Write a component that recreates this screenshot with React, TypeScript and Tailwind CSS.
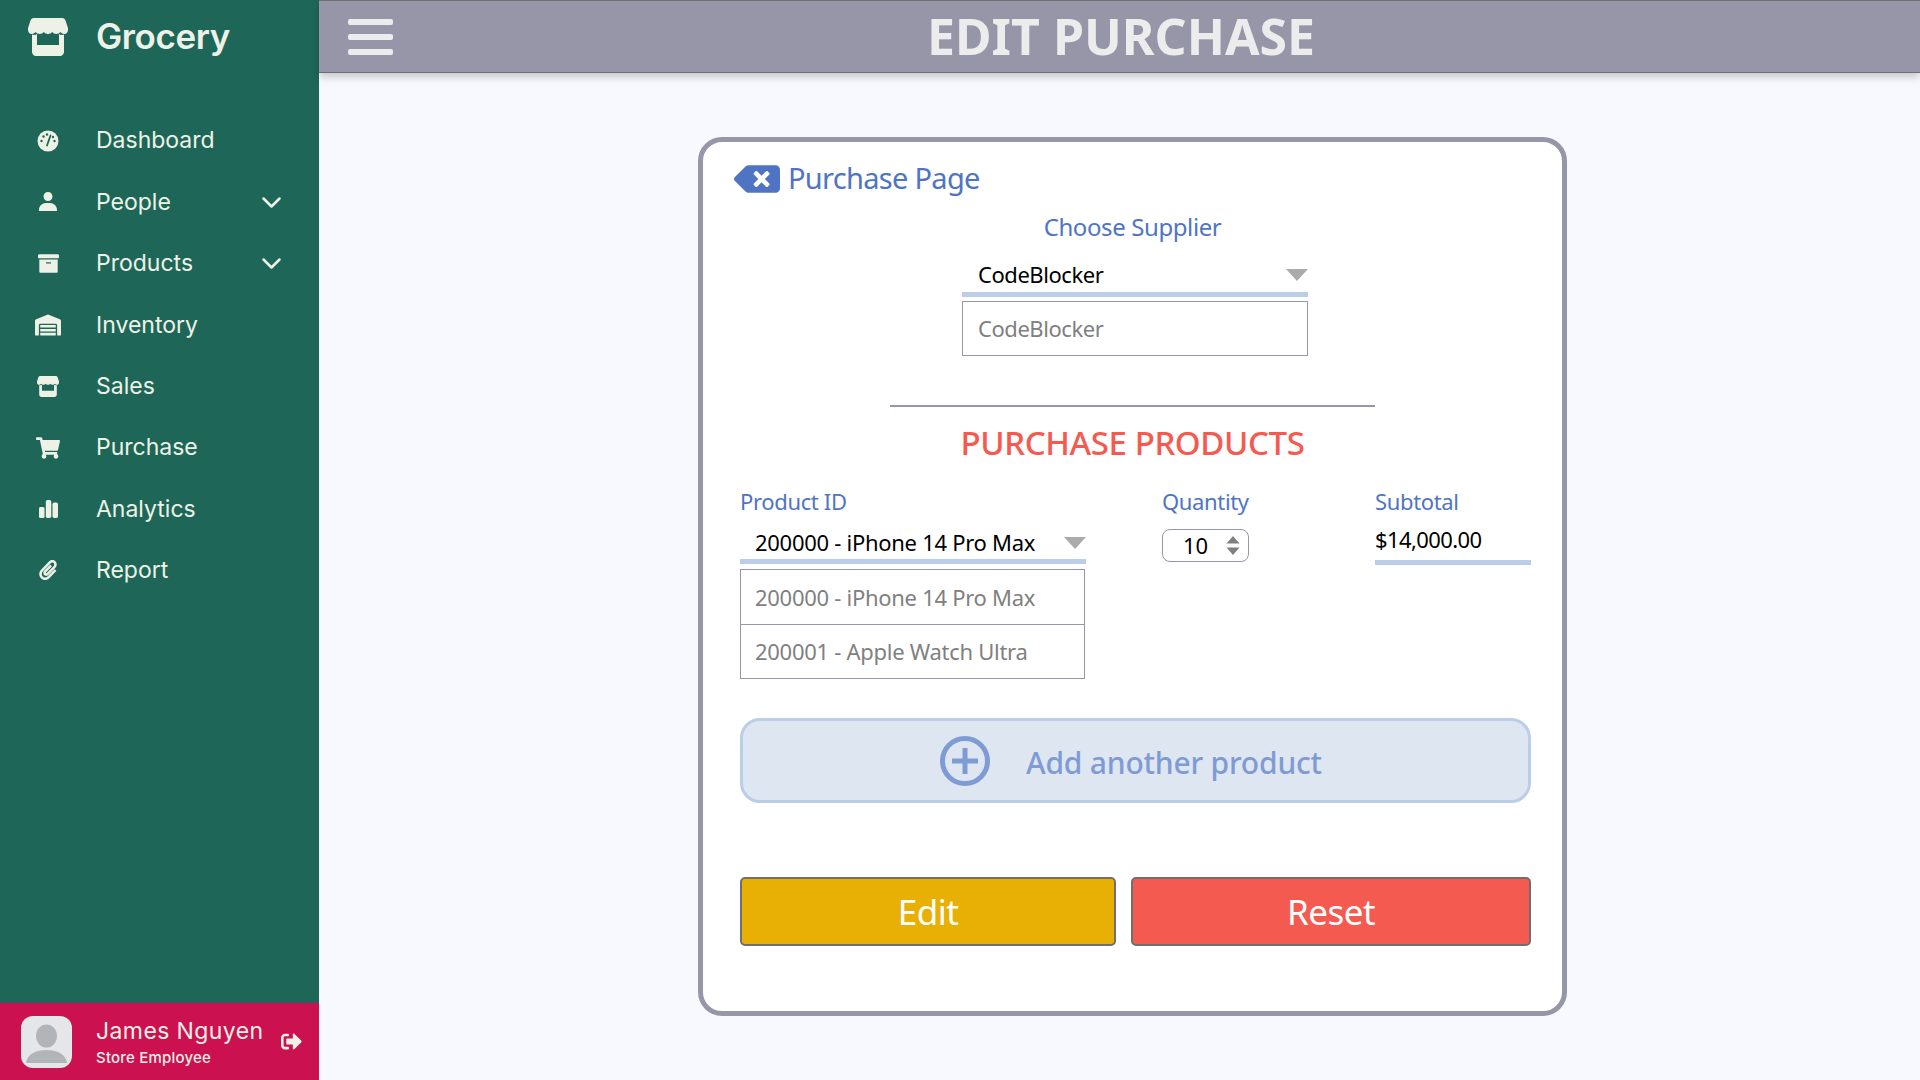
import { ReactNode } from 'react';
import { BiSolidUser } from 'react-icons/bi';
import { FaArchive, FaBackspace, FaPaperclip, FaShoppingCart, FaSignOutAlt, FaWarehouse } from 'react-icons/fa';

function StoreIcon({ width }: { width: number }) {
  return (
    <svg width={width} viewBox="0 0 40 38" fill="#eef2e6" className="shrink-0">
      <path d="M6 0h28c2 0 3 1 3.500 2.500L40 10c.5 3-1 6-3.500 6-2 0-3-1-4-2-1 1-2.500 2-4.200 2-1.800 0-3-1-4.100-2-1 1-2.500 2-4.200 2s-3.200-1-4.200-2c-1 1-2.400 2-4.100 2-1.700 0-3.200-1-4.200-2-1 1-2 2-4 2C1 16-.5 13 0 10l2.500-7.500C3 1 4 0 6 0z" />
      <path d="M4 16.500c2 .8 4 .3 5-.5V27h22V16c1 .8 3 1.300 5 .5V34c0 2.200-1.800 4-4 4H8c-2.200 0-4-1.800-4-4z" />
    </svg>
  );
}

function DashIcon() {
  return (
    <svg width="22" height="22" viewBox="0 0 22 22" className="shrink-0">
      <circle cx="11" cy="11" r="10.500" fill="#eef2e6" />
      <path d="M10 15.500L13.500 5.500" stroke="#1e6758" strokeWidth="1.800" strokeLinecap="round" />
      <circle cx="4.500" cy="11" r="1.200" fill="#1e6758" />
      <circle cx="6.500" cy="6.500" r="1.200" fill="#1e6758" />
      <circle cx="10" cy="4.500" r="1.200" fill="#1e6758" />
      <circle cx="17.500" cy="11" r="1.200" fill="#1e6758" />
      <circle cx="16" cy="7" r="1.200" fill="#1e6758" />
    </svg>
  );
}

function BarsIcon() {
  return (
    <svg width="19" height="18" viewBox="0 0 19 18" fill="#eef2e6" className="shrink-0">
      <rect x="0" y="7" width="5.500" height="11" rx="1.500" />
      <rect x="6.800" y="0" width="5.500" height="18" rx="1.800" />
      <rect x="13.500" y="2.500" width="5.500" height="15.500" rx="1.800" />
    </svg>
  );
}

function Chevron() {
  return (
    <svg width="19" height="11" viewBox="0 0 19 11" fill="none" stroke="#eef2e6" strokeWidth="2.500" strokeLinecap="round" strokeLinejoin="round" className="shrink-0">
      <path d="M1.500 1.500l8 8 8-8" />
    </svg>
  );
}

const navItems: { label: string; icon: ReactNode; chevron?: boolean }[] = [
  { label: 'Dashboard', icon: <DashIcon /> },
  { label: 'People', icon: <BiSolidUser size={24} />, chevron: true },
  { label: 'Products', icon: <FaArchive size={21} />, chevron: true },
  { label: 'Inventory', icon: <FaWarehouse size={26} /> },
  { label: 'Sales', icon: <StoreIcon width={22} /> },
  { label: 'Purchase', icon: <FaShoppingCart size={24} /> },
  { label: 'Analytics', icon: <BarsIcon /> },
  { label: 'Report', icon: <FaPaperclip size={20} /> },
];

function Triangle() {
  return (
    <svg width="22" height="12" viewBox="0 0 22 12" className="shrink-0">
      <path d="M0 0h22L11 12z" fill="#ababab" />
    </svg>
  );
}

function Sidebar() {
  return (
    <aside className="w-[319px] shrink-0 h-screen flex flex-col bg-[#1e6758] text-[#eef2e6] font-['Inter',sans-serif]">
      <div className="h-[74px] flex items-center pl-[28px]">
        <StoreIcon width={40} />
        <span className="ml-[28px] -mt-[2px] text-[35px] font-semibold tracking-[-0.4px]">Grocery</span>
      </div>
      <nav className="mt-[36px] flex flex-col">
        {navItems.map((item) => (
          <div key={item.label} className="h-[61.4px] flex items-center pl-[30px] pr-[38px]">
            <span className="w-[36px] flex justify-center shrink-0">{item.icon}</span>
            <span className="ml-[30px] text-[23px] flex-1">{item.label}</span>
            {item.chevron && <Chevron />}
          </div>
        ))}
      </nav>
      <div className="mt-auto h-[77px] bg-[#cc1150] flex items-center pl-[21px]">
        <div className="w-[51px] h-[52px] rounded-[12px] bg-[#e4e6e8] overflow-hidden shrink-0">
          <svg viewBox="0 0 51 52" className="w-full h-full">
            <ellipse cx="25.500" cy="20" rx="10.500" ry="11.500" fill="#b1b5b8" />
            <path d="M5 47c1-9 10-13 20.500-13S45 38 46 47z" fill="#b1b5b8" />
          </svg>
        </div>
        <div className="ml-[24px] pt-[2px] flex flex-col flex-1">
          <span className="text-[23px] leading-[28px] tracking-[0.4px]">James Nguyen</span>
          <span className="mt-[2px] text-[15px] leading-[22px] font-medium tracking-[0.2px]">Store Employee</span>
        </div>
        <FaSignOutAlt size={21} className="mr-[17px]" />
      </div>
    </aside>
  );
}

function Header() {
  return (
    <header className="h-[73px] shrink-0 bg-[#9795a8] border-y border-[#6f6f6f] shadow-[0_4px_8px_rgba(0,0,0,0.2)] flex items-center pl-[29px]">
      <div className="w-[45px] flex flex-col gap-[9px] shrink-0">
        <div className="h-[6px] rounded-[2px] bg-[#ececec]" />
        <div className="h-[6px] rounded-[2px] bg-[#ececec]" />
        <div className="h-[6px] rounded-[2px] bg-[#ececec]" />
      </div>
      <h1 className="ml-[534px] -mt-[1px] text-[50px] font-bold text-[#ececec] leading-none">EDIT PURCHASE</h1>
    </header>
  );
}

function PurchaseCard() {
  return (
    <div className="mt-[64px] ml-[379px] w-[869px] h-[879px] box-border border-[5px] border-[#9795a8] rounded-[24px] bg-white pl-[37px] pr-[31px] text-black">
      <div className="h-[40px] mt-[18px] flex items-center -ml-[6px]">
        <FaBackspace size={46} className="-mt-[3px] text-[#4f74c4] shrink-0" />
        <span className="ml-[8px] -mt-[4px] text-[29px] tracking-[-0.7px] text-[#4f74c4]">Purchase Page</span>
      </div>
      <div className="mt-[12px] h-[32px] text-center text-[24px] leading-[30px] tracking-[-0.4px] text-[#4f74c4] -ml-[6px]">Choose Supplier</div>

      <div className="ml-[222px] w-[346px]">
        <div className="mt-[14px] h-[39px] border-b-[5px] border-[#bccde8] flex items-center justify-between pl-[16px]">
          <span className="-mt-[1px] text-[22px] tracking-[-0.45px]">CodeBlocker</span>
          <Triangle />
        </div>
        <div className="mt-[4px] h-[55px] border border-[#9795a8] flex items-center pl-[15px] text-[22px] tracking-[-0.45px] text-[#808080]">CodeBlocker</div>
      </div>

      <div className="mt-[49px] ml-[150px] w-[485px] h-[2px] bg-[#9795a8]" />
      <div className="mt-[14px] h-[44px] text-center text-[33px] leading-[44px] font-medium tracking-[-0.4px] text-[#f55a50] -ml-[6px]">PURCHASE PRODUCTS</div>

      <div className="mt-[23px] flex">
        <div className="w-[346px]">
          <div className="h-[30px] text-[22px] leading-[26px] tracking-[-0.35px] text-[#4f74c4]">Product ID</div>
          <div className="mt-[8px] h-[38px] border-b-[5px] border-[#bccde8] flex items-center justify-between pl-[15px]">
            <span className="text-[22px] tracking-[-0.28px]">200000 - iPhone 14 Pro Max</span>
            <Triangle />
          </div>
          <div className="mt-[5px] w-[345px] border border-[#9795a8] text-[22px] tracking-[-0.28px] text-[#808080]">
            <div className="h-[55px] flex items-center pl-[14px] border-b border-[#9795a8]">200000 - iPhone 14 Pro Max</div>
            <div className="h-[53px] flex items-center pl-[14px]">200001 - Apple Watch Ultra</div>
          </div>
        </div>
        <div className="ml-[76px] w-[87px]">
          <div className="h-[30px] text-[22px] leading-[26px] tracking-[-0.35px] text-[#4f74c4]">Quantity</div>
          <div className="mt-[11px] h-[33px] border border-[#9795a8] rounded-[8px] flex items-center justify-between pl-[20px] pr-[8px] text-[22px]">
            <span>10</span>
            <svg width="14" height="19" viewBox="0 0 14 19">
              <path d="M7 0l6.500 7.500h-13zM7 19L.5 11.500h13z" fill="#808080" />
            </svg>
          </div>
        </div>
        <div className="ml-[126px] w-[156px]">
          <div className="h-[30px] text-[22px] leading-[26px] tracking-[-0.35px] text-[#4f74c4]">Subtotal</div>
          <div className="mt-[8px] h-[39px] border-b-[5px] border-[#bccde8] flex items-center pb-[7px] text-[22px] tracking-[-0.6px]">$14,000.00</div>
        </div>
      </div>

      <div className="mt-[39px] h-[85px] border-[3px] border-[#bccde8] rounded-[20px] bg-[#dee6f2] flex items-center pl-[197px] text-[#7f9bd4]">
        <svg width="50" height="50" viewBox="0 0 50 50" className="shrink-0">
          <circle cx="25" cy="25" r="22.500" fill="none" stroke="#7f9bd4" strokeWidth="5" />
          <path d="M25 12v26M12 25h26" stroke="#7f9bd4" strokeWidth="5" />
        </svg>
        <span className="ml-[36px] mt-[3px] text-[30px] font-medium tracking-[-0.2px]">Add another product</span>
      </div>

      <div className="mt-[74px] flex gap-[15px]">
        <button type="button" className="w-[376px] h-[69px] pt-[2px] rounded-[5px] border-2 border-[#6f6f6f] bg-[#e8b004] text-white text-[35px] tracking-[-0.5px]">Edit</button>
        <button type="button" className="w-[400px] h-[69px] pt-[2px] rounded-[5px] border-2 border-[#6f6f6f] bg-[#f55a50] text-white text-[35px] tracking-[-0.5px]">Reset</button>
      </div>
    </div>
  );
}

export default function App() {
  return (
    <div className="flex h-screen w-screen overflow-hidden bg-[#f8f8ff] font-['Noto_Sans',sans-serif]">
      <Sidebar />
      <main className="flex-1 flex flex-col min-w-0">
        <Header />
        <PurchaseCard />
      </main>
    </div>
  );
}
